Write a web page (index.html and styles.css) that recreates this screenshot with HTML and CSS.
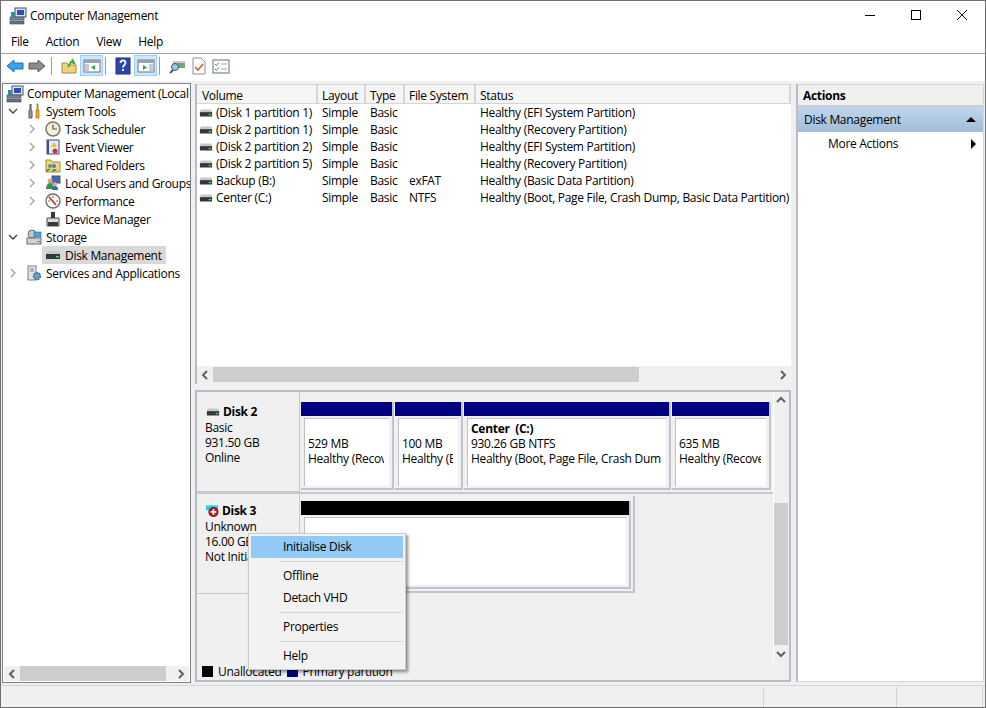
FILE: index.html
```html
<!DOCTYPE html>
<html lang="en">
<head>
    <meta charset="UTF-8">
    <title>Computer Management</title>
    <link rel="stylesheet" href="styles.css">
</head>
<body>
    <svg class="defs" width="0" height="0">
        <symbol id="computer" viewBox="0 0 18 18">
            <rect x="6" y="1" width="11" height="9" fill="#dfe6f2" stroke="#46505f"/>
            <rect x="8" y="3" width="7" height="5" fill="#2c4fc0"/>
            <rect x="1" y="10" width="14" height="3" fill="#7c8794" stroke="#3c444e" stroke-width=".6"/>
            <rect x="1" y="14" width="14" height="3" fill="#68727e" stroke="#3c444e" stroke-width=".6"/>
            <rect x="2" y="5" width="4" height="5" fill="#2f8f9f"/>
        </symbol>
        <symbol id="disk" viewBox="0 0 16 10">
            <path d="M2 1h12l1 3H1z" fill="#c4c8cc"/>
            <rect x="1" y="4" width="14" height="5" fill="#33373b"/>
            <rect x="11" y="6" width="3" height="1.5" fill="#3de04a"/>
        </symbol>
    </svg>

    <div class="window">
        <div class="titlebar">
            <svg class="title-icon"><use href="#computer"/></svg>
            <span class="title-text">Computer Management</span>
            <div class="caption">
                <svg width="12" height="12" viewBox="0 0 12 12"><path d="M1 6.500h10" stroke="#000"/></svg>
                <svg width="12" height="12" viewBox="0 0 12 12"><rect x="1.500" y="1.500" width="9" height="9" fill="none" stroke="#000"/></svg>
                <svg width="12" height="12" viewBox="0 0 12 12"><path d="M1 1l10 10M11 1L1 11" stroke="#000"/></svg>
            </div>
        </div>

        <div class="menubar">
            <span>File</span><span>Action</span><span>View</span><span>Help</span>
        </div>

        <div class="toolbar">
            <svg class="tool back" viewBox="0 0 18 18"><path d="M1 9l7-6v3h9v6H8v3z" fill="#38a4ee" stroke="#1f6fb8"/></svg>
            <svg class="tool" viewBox="0 0 18 18"><path d="M17 9l-7-6v3H1v6h9v3z" fill="#8a8a8a" stroke="#5c5c5c"/></svg>
            <i class="sep first"></i>
            <svg class="tool" viewBox="0 0 18 18"><path d="M2 6h5l1 2h8v8H2z" fill="#f0d27a" stroke="#a98a35"/><path d="M8 10l3-5 3 1-2-4" fill="none" stroke="#3fae3f" stroke-width="2"/></svg>
            <span class="tool-on"><svg class="tool" viewBox="0 0 18 18"><rect x="1" y="3" width="16" height="12" fill="#fff" stroke="#6c7480"/><rect x="1" y="3" width="16" height="3" fill="#9aa3b0"/><rect x="2" y="7" width="4" height="7" fill="#c6ccd6"/><path d="M12 8l-4 2.500 4 2.500z" fill="#2aa84a"/></svg></span>
            <i class="sep"></i>
            <svg class="tool" viewBox="0 0 18 18"><rect x="2" y="1" width="14" height="16" fill="#2d45b0" stroke="#1c2c78"/><path d="M6.500 6c0-3.500 5-3.500 5 0 0 2-2.500 2-2.500 4.500M9 12v2" fill="none" stroke="#fff" stroke-width="1.800"/></svg>
            <span class="tool-on"><svg class="tool" viewBox="0 0 18 18"><rect x="1" y="3" width="16" height="12" fill="#fff" stroke="#6c7480"/><rect x="1" y="3" width="16" height="3" fill="#9aa3b0"/><rect x="12" y="7" width="4" height="7" fill="#c6ccd6"/><path d="M6 8l4 2.500-4 2.500z" fill="#2aa84a"/></svg></span>
            <i class="sep"></i>
            <svg class="tool back" viewBox="0 0 18 18"><path d="M5 5h12v6H5z" fill="#8e9398"/><path d="M5 4h12v2H5z" fill="#c9ccd0"/><rect x="10" y="7.500" width="5" height="2" fill="#2bd24a"/><path d="M5 13l-3 3" stroke="#555" stroke-width="2"/><circle cx="7" cy="10" r="3.500" fill="#9ec8ea" stroke="#4a5058"/></svg>
            <svg class="tool back" viewBox="0 0 18 18"><path d="M3 1h8l4 4v12H3z" fill="#fff" stroke="#8a8f96"/><path d="M5 10l3 3 5-6" fill="none" stroke="#e2562a" stroke-width="1.600"/></svg>
            <svg class="tool" viewBox="0 0 18 18"><rect x="1" y="3" width="16" height="13" fill="#fff" stroke="#666e78"/><path d="M3 7l1.500 1.500L7 5.500M3 12l1.500 1.500L7 10.500" fill="none" stroke="#2c7fd0"/><path d="M9 7h6M9 12h6" stroke="#9aa2ac"/></svg>
        </div>

        <div class="main">
            <div class="tree">
                <div class="tree-list">
                    <div class="tree-item lvl0"><svg class="icon"><use href="#computer"/></svg><span>Computer Management (Local</span></div>

                    <div class="tree-item lvl1">
                        <svg class="chev" viewBox="0 0 10 10"><path d="M1 3l4 4 4-4" fill="none" stroke="#404040" stroke-width="1.300"/></svg>
                        <svg class="icon" viewBox="0 0 16 16"><path d="M4 1v5l-1 2v7h3V8L5 6V1" fill="#9aa0a6" stroke="#555"/><path d="M11 1v6h-1v8h3V7h-1V1z" fill="#eab51c" stroke="#8c6a10" stroke-width=".7"/></svg>
                        <span>System Tools</span>
                    </div>
                    <div class="tree-item lvl2">
                        <svg class="chev" viewBox="0 0 10 10"><path d="M3 1l4 4-4 4" fill="none" stroke="#a0a0a0" stroke-width="1.300"/></svg>
                        <svg class="icon" viewBox="0 0 16 16"><circle cx="8" cy="8" r="7" fill="#f4efd8" stroke="#77786e" stroke-width="1.500"/><path d="M8 3.500V8h4" fill="none" stroke="#555" stroke-width="1.200"/></svg>
                        <span>Task Scheduler</span>
                    </div>
                    <div class="tree-item lvl2">
                        <svg class="chev" viewBox="0 0 10 10"><path d="M3 1l4 4-4 4" fill="none" stroke="#a0a0a0" stroke-width="1.300"/></svg>
                        <svg class="icon" viewBox="0 0 16 16"><rect x="2" y="1" width="12" height="14" fill="#e6eaf4" stroke="#3c4f8c"/><rect x="2" y="1" width="2" height="14" fill="#3c4f8c"/><path d="M9 3l3 5H6z" fill="#f0c020"/><circle cx="10" cy="12" r="2.500" fill="#c8323a"/></svg>
                        <span>Event Viewer</span>
                    </div>
                    <div class="tree-item lvl2">
                        <svg class="chev" viewBox="0 0 10 10"><path d="M3 1l4 4-4 4" fill="none" stroke="#a0a0a0" stroke-width="1.300"/></svg>
                        <svg class="icon" viewBox="0 0 16 16"><path d="M1 3h5l1 2h8v10H1z" fill="#f0d680" stroke="#a98a35"/><circle cx="5" cy="9" r="2" fill="#5aa05a"/><circle cx="9" cy="9" r="2" fill="#5478c0"/><path d="M1 15c0-3 3-4 5-3M7 15c0-3 3-4 5-2" fill="#3f7f4f"/></svg>
                        <span>Shared Folders</span>
                    </div>
                    <div class="tree-item lvl2">
                        <svg class="chev" viewBox="0 0 10 10"><path d="M3 1l4 4-4 4" fill="none" stroke="#a0a0a0" stroke-width="1.300"/></svg>
                        <svg class="icon" viewBox="0 0 16 16"><rect x="7" y="1" width="8" height="7" fill="#3f68c8" stroke="#555"/><circle cx="5" cy="6" r="2.500" fill="#d8a878"/><path d="M1 14c0-4 2-6 4-6s4 2 4 6z" fill="#3f8f5a"/><circle cx="10" cy="9" r="2" fill="#d8a878"/><path d="M7 15c0-3 1-4 3-4s3 1 3 4z" fill="#3a68b0"/></svg>
                        <span>Local Users and Groups</span>
                    </div>
                    <div class="tree-item lvl2">
                        <svg class="chev" viewBox="0 0 10 10"><path d="M3 1l4 4-4 4" fill="none" stroke="#a0a0a0" stroke-width="1.300"/></svg>
                        <svg class="icon" viewBox="0 0 16 16"><circle cx="8" cy="8" r="7" fill="#fbfbf6" stroke="#6a6a6a" stroke-width="1.300"/><path d="M4 4l7 8" stroke="#d02828" stroke-width="1.600"/><path d="M8 3v2M3 8h2M13 8h-2" stroke="#777"/></svg>
                        <span>Performance</span>
                    </div>
                    <div class="tree-item lvl2 no-chev">
                        <svg class="icon" viewBox="0 0 16 16"><rect x="6" y="1" width="4" height="6" fill="#3a3a3a"/><path d="M2 7h12v8H2z" fill="#dcdcdc" stroke="#4a4a4a"/><rect x="3" y="11" width="10" height="4" fill="#3a3a3a"/></svg>
                        <span>Device Manager</span>
                    </div>

                    <div class="tree-item lvl1">
                        <svg class="chev" viewBox="0 0 10 10"><path d="M1 3l4 4 4-4" fill="none" stroke="#404040" stroke-width="1.300"/></svg>
                        <svg class="icon" viewBox="0 0 16 16"><circle cx="6" cy="5" r="4" fill="#c4c8cc" stroke="#6a6f74"/><rect x="8" y="3" width="7" height="5" fill="#3fa8e0" stroke="#2a6f98" stroke-width=".6"/><rect x="1" y="9" width="14" height="6" fill="#d0d4d8" stroke="#666a70"/><rect x="11" y="12" width="3" height="1" fill="#2eae3e"/></svg>
                        <span>Storage</span>
                    </div>
                    <div class="tree-item lvl2 no-chev">
                        <span class="selected">
                            <svg class="icon" viewBox="0 0 16 10"><use href="#disk"/></svg>
                            <span>Disk Management</span>
                        </span>
                    </div>

                    <div class="tree-item lvl1">
                        <svg class="chev" viewBox="0 0 10 10"><path d="M3 1l4 4-4 4" fill="none" stroke="#a0a0a0" stroke-width="1.300"/></svg>
                        <svg class="icon" viewBox="0 0 16 16"><rect x="2" y="1" width="8" height="14" fill="#e4e6ea" stroke="#7c8088"/><path d="M4 4h4M4 6h4" stroke="#7c8088"/><circle cx="11" cy="11" r="3.500" fill="#6a9cc8" stroke="#3c6a94" stroke-width="1.500" stroke-dasharray="2 1"/></svg>
                        <span>Services and Applications</span>
                    </div>
                </div>
                <div class="hscroll tree-scroll">
                    <svg class="arrow" viewBox="0 0 10 10"><path d="M7 1L3 5l4 4" fill="none" stroke="#606060" stroke-width="2"/></svg>
                    <div class="thumb-track"><div class="thumb tree-thumb"></div></div>
                    <svg class="arrow" viewBox="0 0 10 10"><path d="M3 1l4 4-4 4" fill="none" stroke="#606060" stroke-width="2"/></svg>
                </div>
            </div>

            <div class="center">
                <div class="volumes">
                    <div class="volume-table">
                        <table>
                            <thead>
                                <tr><th class="c-vol">Volume</th><th class="c-layout">Layout</th><th class="c-type">Type</th><th class="c-fs">File System</th><th class="c-status">Status</th></tr>
                            </thead>
                            <tbody>
                                <tr><td><svg class="disk-icon"><use href="#disk"/></svg>(Disk 1 partition 1)</td><td>Simple</td><td>Basic</td><td></td><td>Healthy (EFI System Partition)</td></tr>
                                <tr><td><svg class="disk-icon"><use href="#disk"/></svg>(Disk 2 partition 1)</td><td>Simple</td><td>Basic</td><td></td><td>Healthy (Recovery Partition)</td></tr>
                                <tr><td><svg class="disk-icon"><use href="#disk"/></svg>(Disk 2 partition 2)</td><td>Simple</td><td>Basic</td><td></td><td>Healthy (EFI System Partition)</td></tr>
                                <tr><td><svg class="disk-icon"><use href="#disk"/></svg>(Disk 2 partition 5)</td><td>Simple</td><td>Basic</td><td></td><td>Healthy (Recovery Partition)</td></tr>
                                <tr><td><svg class="disk-icon"><use href="#disk"/></svg>Backup (B:)</td><td>Simple</td><td>Basic</td><td>exFAT</td><td>Healthy (Basic Data Partition)</td></tr>
                                <tr><td><svg class="disk-icon"><use href="#disk"/></svg>Center (C:)</td><td>Simple</td><td>Basic</td><td>NTFS</td><td>Healthy (Boot, Page File, Crash Dump, Basic Data Partition)</td></tr>
                            </tbody>
                        </table>
                    </div>
                    <div class="hscroll list-scroll">
                        <svg class="arrow" viewBox="0 0 10 10"><path d="M7 1L3 5l4 4" fill="none" stroke="#606060" stroke-width="2"/></svg>
                        <div class="thumb-track"><div class="thumb list-thumb"></div></div>
                        <svg class="arrow" viewBox="0 0 10 10"><path d="M3 1l4 4-4 4" fill="none" stroke="#606060" stroke-width="2"/></svg>
                    </div>
                </div>

                <div class="disks">
                    <div class="disks-body">
                        <div class="disk-rows">
                            <div class="disk-row row-2">
                                <div class="disk-label">
                                    <div class="disk-name"><svg class="disk-icon"><use href="#disk"/></svg><b>Disk 2</b></div>
                                    <div>Basic</div>
                                    <div>931.50 GB</div>
                                    <div>Online</div>
                                </div>
                                <div class="partitions">
                                    <div class="part p-529"><div class="part-head"></div><div class="part-box"><div class="part-text"><div>529 MB</div><div>Healthy (Recovery Partition)</div></div></div></div>
                                    <div class="part p-100"><div class="part-head"></div><div class="part-box"><div class="part-text"><div>100 MB</div><div>Healthy (EFI System Partition)</div></div></div></div>
                                    <div class="part p-930"><div class="part-head"></div><div class="part-box"><div class="part-text"><b>Center&nbsp; (C:)</b><div>930.26 GB NTFS</div><div>Healthy (Boot, Page File, Crash Dump, Basic Data Partition)</div></div></div></div>
                                    <div class="part p-635"><div class="part-head"></div><div class="part-box"><div class="part-text"><div>635 MB</div><div>Healthy (Recovery Partition)</div></div></div></div>
                                </div>
                            </div>
                            <div class="disk-row row-3">
                                <div class="disk-label">
                                    <div class="disk-name">
                                        <svg class="disk-icon alert" viewBox="0 0 15 14"><rect x="0" y="1" width="13" height="5" fill="#12d8e8"/><circle cx="8" cy="8" r="5.500" fill="#a81822"/><path d="M8 5v6M5 8h6" stroke="#fff" stroke-width="2"/></svg>
                                        <b>Disk 3</b>
                                    </div>
                                    <div>Unknown</div>
                                    <div>16.00 GB</div>
                                    <div>Not Initialised</div>
                                </div>
                                <div class="partitions">
                                    <div class="part p-raw"><div class="part-head black"></div><div class="part-box"></div></div>
                                </div>
                            </div>
                        </div>
                        <div class="vscroll">
                            <svg class="arrow" viewBox="0 0 10 10"><path d="M1 7l4-4 4 4" fill="none" stroke="#606060" stroke-width="2"/></svg>
                            <div class="thumb-track"><div class="thumb v-thumb"></div></div>
                            <svg class="arrow" viewBox="0 0 10 10"><path d="M1 3l4 4 4-4" fill="none" stroke="#606060" stroke-width="2"/></svg>
                        </div>
                    </div>
                    <div class="legend">
                        <i class="swatch black"></i><span>Unallocated</span>
                        <i class="swatch navy"></i><span>Primary partition</span>
                    </div>
                </div>
            </div>

            <div class="actions">
                <div class="actions-title">Actions</div>
                <div class="actions-group"><span>Disk Management</span><i class="tri-up"></i></div>
                <div class="actions-item"><span>More Actions</span><i class="tri-right"></i></div>
            </div>
        </div>

        <div class="statusbar">
            <div class="seg seg-a"></div>
            <div class="seg seg-b"></div>
            <div class="seg seg-c"></div>
        </div>

        <div class="context-menu">
            <div class="menu-item active">Initialise Disk</div>
            <div class="menu-sep"></div>
            <div class="menu-item">Offline</div>
            <div class="menu-item">Detach VHD</div>
            <div class="menu-sep"></div>
            <div class="menu-item">Properties</div>
            <div class="menu-sep"></div>
            <div class="menu-item">Help</div>
        </div>
    </div>
</body>
</html>
```

FILE: styles.css
```css
* {
    box-sizing: border-box;
}

body {
    margin: 0;
    font-family: "Open Sans", "Noto Sans", Arial, sans-serif;
    font-size: 12px;
    letter-spacing: -0.3px;
    color: #000;
    background-color: #fff;
}

.defs {
    position: absolute;
}

svg {
    display: block;
    flex: none;
}

.window {
    width: 986px;
    height: 708px;
    border: 1px solid #707070;
    display: flex;
    flex-direction: column;
    position: relative;
    overflow: hidden;
    background-color: #f0f0f0;
}

/* title, menu, toolbar */
.titlebar {
    height: 29px;
    display: flex;
    align-items: center;
    padding-left: 8px;
    background-color: #fff;
}

.title-icon {
    width: 18px;
    height: 18px;
    margin-right: 3px;
}

.title-text {
    flex: 1;
}

.caption {
    display: flex;
    gap: 34px;
    padding-right: 17px;
    margin-top: -1px;
}

.menubar {
    height: 24px;
    display: flex;
    gap: 17px;
    align-items: center;
    padding-left: 10px;
    background-color: #fff;
    border-bottom: 1px solid #a0a0a8;
}

.toolbar {
    height: 27px;
    display: flex;
    align-items: center;
    gap: 2px;
    padding: 0 0 4px 5px;
    background-color: #fff;
}

.tool {
    width: 18px;
    height: 18px;
}

.tool.back {
    margin-right: 2px;
}

.tool-on {
    width: 23px;
    height: 21px;
    padding: 1px 2px;
    background-color: #cce8ff;
    border: 1px solid #99d1ff;
}

.sep {
    width: 1px;
    height: 18px;
    margin-right: 6px;
    background-color: #9a9a9a;
}

.sep.first {
    margin-left: 3px;
}

/* panes */
.main {
    flex: 1;
    display: flex;
    padding: 2px 1px 0;
    min-height: 0;
}

.tree {
    width: 189px;
    height: 600px;
    display: flex;
    flex-direction: column;
    background-color: #fff;
    border: 1px solid #82828c;
}

.tree-list {
    flex: 1;
    overflow: hidden;
}

.tree-item {
    height: 18px;
    display: flex;
    align-items: center;
    white-space: nowrap;
}

.icon {
    width: 16px;
    height: 16px;
}

.chev {
    width: 10px;
    height: 10px;
}

.lvl0 {
    padding: 1px 0 0 3px;
}

.lvl0 .icon {
    width: 18px;
    height: 18px;
    margin-right: 3px;
}

.lvl1 {
    padding-left: 5px;
}

.lvl1 .chev {
    margin-right: 8px;
}

.lvl1 .icon {
    margin-right: 4px;
}

.lvl2 {
    padding-left: 24px;
}

.lvl2 .chev {
    margin-right: 8px;
}

.lvl2 .icon {
    margin-right: 4px;
}

.lvl2.no-chev {
    padding-left: 42px;
}

.lvl2 .selected {
    display: flex;
    align-items: center;
    height: 18px;
    margin-left: -3px;
    padding: 0 4px 0 3px;
    background-color: #d9d9d9;
}

/* scroll bars */
.hscroll {
    display: flex;
    align-items: center;
    background-color: #f0f0f0;
}

.arrow {
    width: 10px;
    height: 10px;
    margin: 0 3px;
}

.thumb-track {
    flex: 1;
    height: 100%;
}

.thumb {
    background-color: #cdcdcd;
    height: 100%;
}

.tree-scroll {
    height: 15px;
    margin: 0 1px 1px;
}

.tree-thumb {
    width: 146px;
}

.center {
    width: 596px;
    margin: 1px 0 3px 4px;
    display: flex;
    flex-direction: column;
}

.volumes {
    height: 300px;
    display: flex;
    flex-direction: column;
    border-left: 2px solid #b9bcc8;
}

.volume-table {
    flex: 1;
    overflow: hidden;
    background-color: #fff;
}

table {
    border-collapse: collapse;
    table-layout: fixed;
    width: 594px;
    white-space: nowrap;
}

th {
    height: 19px;
    padding: 2px 0 0 4px;
    line-height: 15px;
    font-weight: normal;
    text-align: left;
    background-color: #f5f5f5;
    border-right: 2px solid #d5d5d5;
    border-top: 1px solid #d5d5d5;
    border-bottom: 1px solid #d5d5d5;
}

th:first-child {
    padding-left: 5px;
}

td {
    height: 17px;
    padding: 0 0 0 5px;
    overflow: hidden;
}

td:first-child {
    padding-left: 2px;
}

td:last-child {
    overflow: visible;
}

.c-vol {
    width: 120px;
}

.c-layout {
    width: 48px;
}

.c-type {
    width: 39px;
}

.c-fs {
    width: 71px;
}

.disk-icon {
    display: inline-block;
    width: 14px;
    height: 10px;
    margin-right: 3px;
    vertical-align: -1px;
}

.disk-icon.alert {
    height: 14px;
    margin-right: 2px;
}

.list-scroll {
    height: 15px;
    margin: 1px 0 2px;
}

.list-thumb {
    width: 426px;
}

.disks {
    flex: 1;
    margin-top: 6px;
    border: 2px solid #b9bcc8;
    display: flex;
    flex-direction: column;
}

.disks-body {
    flex: 1;
    display: flex;
    min-height: 0;
}

.disk-rows {
    flex: 1;
}

.disk-row {
    display: flex;
    align-items: flex-start;
}

.row-2 {
    height: 102px;
    border-bottom: 2px solid #c8c8d0;
}

.row-3 {
    height: 100px;
}

.disk-label {
    width: 103px;
    height: 100%;
    padding: 12px 0 0 8px;
    line-height: 15px;
    border-right: 1px solid #c8c8d0;
    border-bottom: 1px solid #c8c8d0;
    white-space: nowrap;
    overflow: hidden;
}

.row-3 .disk-label {
    padding-top: 9px;
}

.disk-name {
    display: flex;
    align-items: center;
    margin-left: 1px;
    margin-bottom: 1px;
}

.partitions {
    display: flex;
    padding: 10px 0 0 1px;
}

/* Disk 3 sits in a second frame */
.row-3 .partitions {
    margin-top: 2px;
    padding: 5px 1px 2px 1px;
    border-right: 2px solid #c0c4d0;
    border-bottom: 2px solid #c0c4d0;
}

.part {
    border-right: 2px solid #c0c4d0;
    border-bottom: 2px solid #c0c4d0;
    height: 88px;
    margin-right: 1px;
}

.part-head {
    height: 14px;
    background-color: #000080;
}

.part-head.black {
    background-color: #000;
}

.part-box {
    height: 68px;
    margin: 2px 3px 0 3px;
    padding: 0 5px 20px 3px;
    background-color: #fff;
    border-top: 1px solid #c0c0c8;
    border-left: 1px solid #c0c0c8;
    line-height: 15px;
    display: flex;
    align-items: flex-end;
    overflow: hidden;
    white-space: nowrap;
}

.part-text {
    overflow: hidden;
    width: 100%;
}

.p-529 {
    width: 93px;
}

.p-100 {
    width: 68px;
}

.p-930 {
    width: 207px;
}

.p-635 {
    width: 99px;
}

.p-raw {
    width: 330px;
}

.vscroll {
    width: 15px;
    margin-right: 1px;
    display: flex;
    flex-direction: column;
    align-items: center;
    border-left: 1px solid #fff;
}

.vscroll .thumb-track {
    width: 100%;
    flex: 1;
    padding-top: 95px;
}

.vscroll .arrow {
    margin: 3px 0;
}

.v-thumb {
    height: 142px;
}

.legend {
    height: 18px;
    display: flex;
    align-items: center;
    padding-left: 5px;
    white-space: nowrap;
}

.swatch {
    width: 11px;
    height: 11px;
    margin-right: 5px;
}

.swatch.black {
    background-color: #000;
}

.swatch.navy {
    background-color: #000080;
    margin-left: 5px;
}

/* actions pane */
.actions {
    width: 188px;
    height: 598px;
    margin: 1px 0 0 5px;
    background-color: #fff;
    border-left: 2px solid #b9bcc8;
    border-right: 1px solid #d5d5d5;
    border-bottom: 1px solid #d5d5d5;
}

.actions-title {
    height: 23px;
    line-height: 22px;
    padding-left: 5px;
    font-weight: bold;
    background-color: #f0f0f0;
    border-top: 1px solid #d5d5d5;
    border-bottom: 2px solid #c8ccd4;
}

.actions-group {
    height: 25px;
    display: flex;
    align-items: center;
    justify-content: space-between;
    padding: 0 7px 0 6px;
    background-image: linear-gradient(#c0d6ec, #a0bcd8);
}

.actions-item {
    height: 23px;
    display: flex;
    align-items: center;
    justify-content: space-between;
    padding: 0 7px 0 30px;
}

.tri-up {
    width: 0;
    height: 0;
    border-left: 5px solid transparent;
    border-right: 5px solid transparent;
    border-bottom: 5px solid #000;
}

.tri-right {
    width: 0;
    height: 0;
    border-top: 5px solid transparent;
    border-bottom: 5px solid transparent;
    border-left: 5px solid #000;
}

/* status bar */
.statusbar {
    height: 22px;
    display: flex;
    border-top: 1px solid #d5d5d5;
}

.seg {
    border-right: 1px solid #d5d5d5;
    margin-top: 1px;
}

.seg-a {
    width: 763px;
}

.seg-b {
    width: 133px;
}

.seg-c {
    width: 86px;
}

/* right click menu on Disk 3 */
.context-menu {
    position: absolute;
    left: 247px;
    top: 532px;
    width: 158px;
    height: 137px;
    padding: 2px;
    background-color: #f2f2f2;
    border: 1px solid #ccc;
    box-shadow: 2px 2px 3px rgba(0, 0, 0, 0.45);
}

.menu-item {
    height: 22px;
    line-height: 22px;
    padding-left: 32px;
}

.menu-item.active {
    background-color: #91c9f7;
}

.menu-sep {
    height: 1px;
    margin: 3px 0 3px 28px;
    background-color: #d5d5d5;
}
```
